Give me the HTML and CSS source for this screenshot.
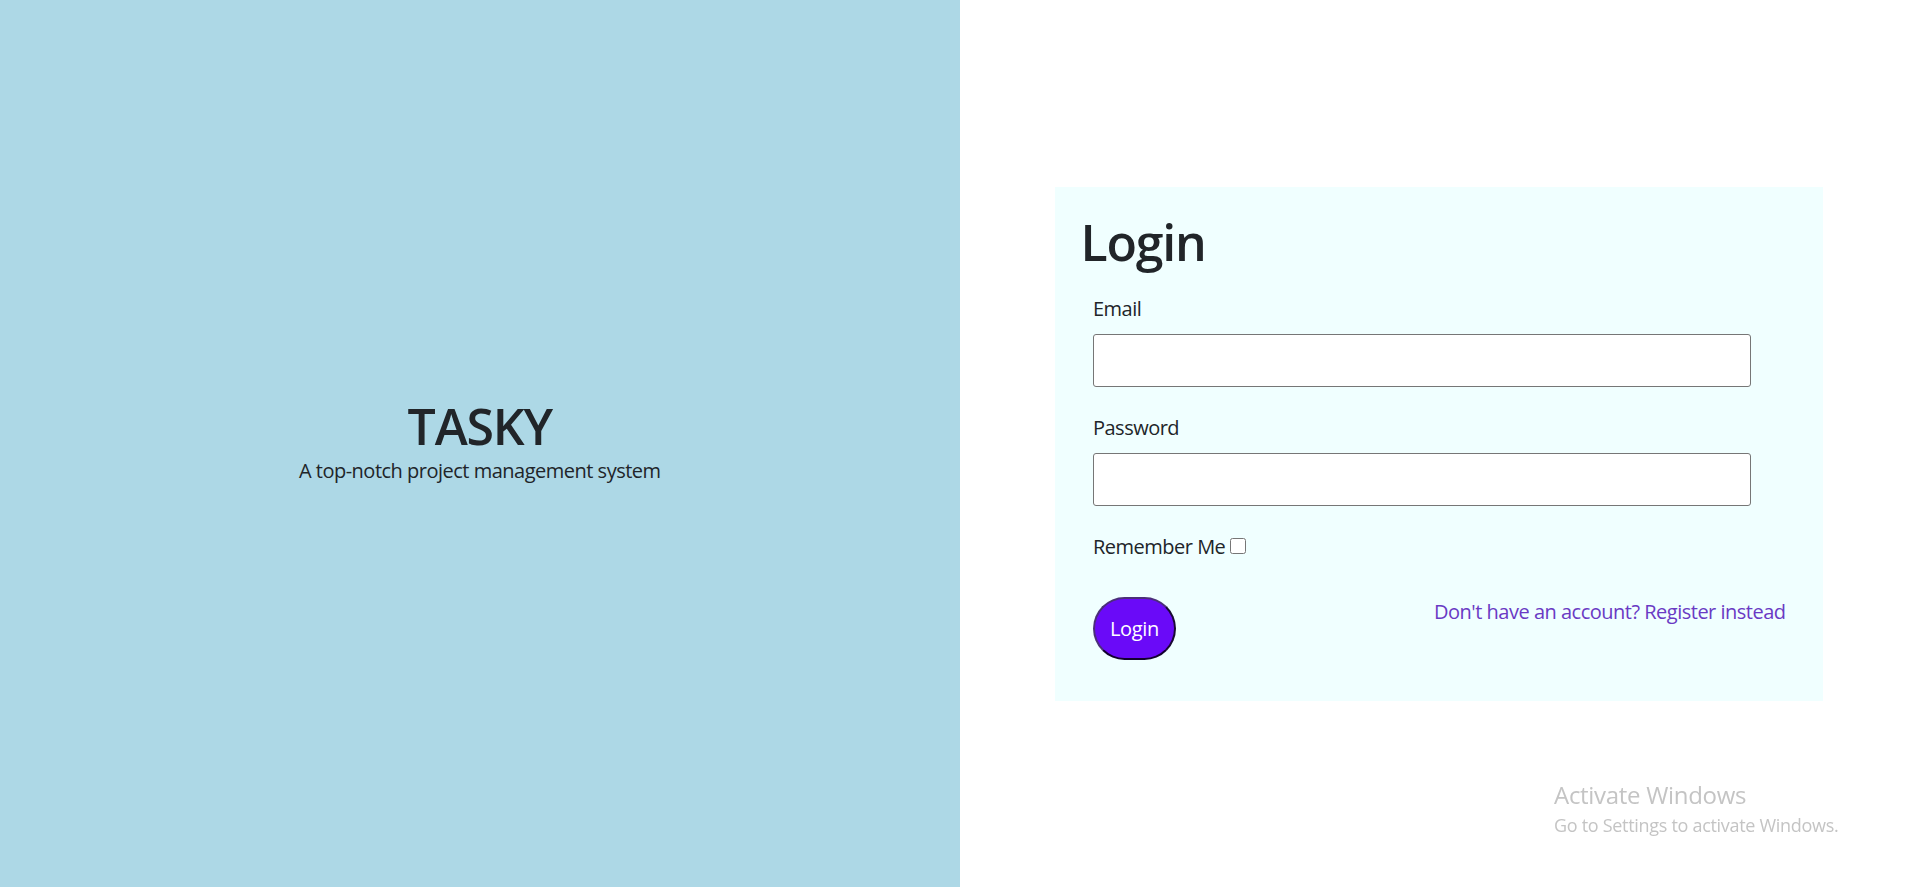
FILE: index.html
```html
<!DOCTYPE html>
<html lang="en">
<head>
<meta charset="utf-8">
<title>Tasky - Login</title>
<link rel="stylesheet" href="styles.css">
</head>
<body>
<main class="page">
  <section class="brand">
    <h1 class="brand-title">TASKY</h1>
    <p class="brand-tagline">A top-notch project management system</p>
  </section>
  <section class="auth">
    <div class="card">
      <h1 class="card-title">Login</h1>
      <form class="form">
        <div class="field">
          <label class="label" for="email">Email</label>
          <input class="input" id="email" type="email">
        </div>
        <div class="field">
          <label class="label" for="password">Password</label>
          <input class="input" id="password" type="password">
        </div>
        <div class="remember"><label for="remember">Remember Me</label><input class="check" id="remember" type="checkbox"></div>
        <div class="actions">
          <button class="btn" type="button">Login</button>
          <a class="link" href="#">Don't have an account? Register instead</a>
        </div>
      </form>
    </div>
  </section>
  <div class="watermark">
    <div class="wm-title">Activate Windows</div>
    <div class="wm-sub">Go to Settings to activate Windows.</div>
  </div>
</main>
</body>
</html>
```

FILE: styles.css
```css
html, body {
  margin: 0;
  padding: 0;
}

body {
  font-family: "Open Sans", "Noto Sans", "DejaVu Sans", sans-serif;
  color: #212529;
  background: #fff;
}

.page {
  display: grid;
  grid-template-columns: 1fr 1fr;
  height: 100vh;
  overflow: hidden;
}

.brand {
  background: #add8e6;
  display: flex;
  flex-direction: column;
  align-items: center;
  justify-content: center;
  padding-bottom: 6px;
}

.brand-title {
  font-size: 50px;
  font-weight: 600;
  letter-spacing: -1.2px;
  line-height: 60px;
  margin: 0;
}

.brand-tagline {
  font-size: 20px;
  letter-spacing: -0.5px;
  line-height: 30px;
  margin: 0;
}

.auth {
  display: flex;
  align-items: center;
  justify-content: center;
  background: #fff;
}

.card {
  width: 80%;
  box-sizing: border-box;
  background: #f0ffff;
  padding: 25px 25px 28px;
}

.card-title {
  font-size: 50px;
  font-weight: 600;
  letter-spacing: -1.2px;
  line-height: 60px;
  margin: 0 0 10px;
}

.form {
  padding: 12.5px;
  font-size: 20px;
  letter-spacing: -0.5px;
}

.field {
  margin-bottom: 26px;
}

.label {
  display: block;
  line-height: 30px;
  margin-bottom: 10px;
}

.input {
  display: block;
  width: 95%;
  height: 53px;
  box-sizing: border-box;
  border: 1px solid #767676;
  border-radius: 3px;
  background: #fff;
  padding: 0 12px;
  font: inherit;
}

.remember {
  line-height: 30px;
  margin-bottom: 35px;
}

.check {
  width: 16px;
  height: 16px;
  margin: 0 0 5px 5px;
  vertical-align: baseline;
}

.actions {
  display: flex;
  justify-content: space-between;
  align-items: flex-start;
}

.btn {
  width: 83px;
  height: 63px;
  box-sizing: border-box;
  border-radius: 32px;
  border: 2px solid;
  border-color: #4b2f7a #1a0a33 #12002e #4b2f7a;
  background: #6a0af8;
  color: #fff;
  font-family: inherit;
  font-size: 20px;
  letter-spacing: -0.3px;
  padding: 0;
}

.link {
  line-height: 30px;
  color: #6a3ac4;
  text-decoration: none;
}

.watermark {
  position: fixed;
  left: 1554px;
  top: 781px;
  color: #c4c4c4;
  pointer-events: none;
}

.wm-title {
  font-size: 24px;
  letter-spacing: -0.3px;
  line-height: 28px;
}

.wm-sub {
  font-size: 18px;
  letter-spacing: -0.3px;
  line-height: 20px;
  margin-top: 6px;
}
```
